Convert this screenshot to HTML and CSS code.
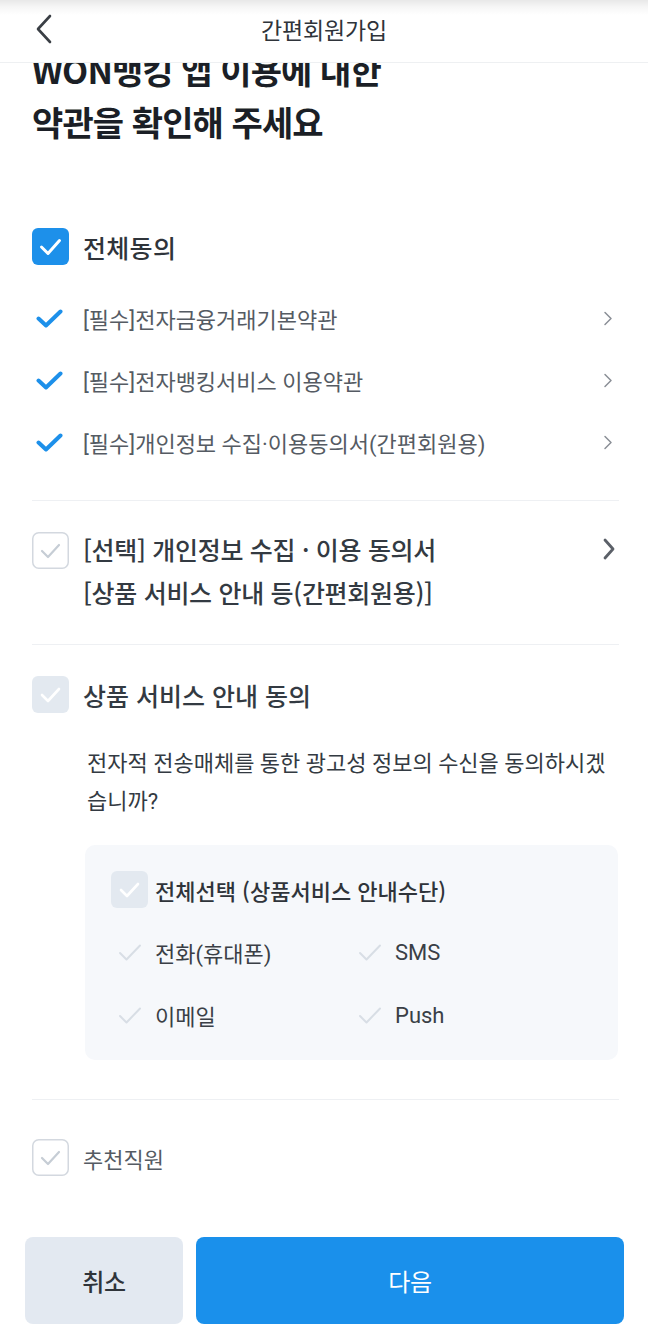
FILE: index.html
```html
<!DOCTYPE html>
<html lang="ko">
<head>
<meta charset="utf-8">
<title>간편회원가입</title>
<link rel="stylesheet" href="styles.css">
</head>
<body>
<header class="topbar">
  <button class="back" aria-label="뒤로">
    <svg width="18" height="30" viewBox="0 0 18 30"><path d="M15 2 L3 15 L15 28" fill="none" stroke="#3a3f45" stroke-width="2.6" stroke-linecap="round" stroke-linejoin="round"/></svg>
  </button>
  <h1 class="topbar-title">간편회원가입</h1>
</header>

<main class="content">
  <h2 class="headline">WON뱅킹 앱 이용에 대한<br>약관을 확인해 주세요</h2>

  <section class="agree-all">
    <div class="row-main">
      <span class="cbox cbox-on">
        <svg width="37" height="37" viewBox="0 0 37 37"><rect x="0" y="0" width="37" height="37" rx="6" fill="#1d90ea"/><path d="M9.5 19 L16 25.5 L27.5 12.5" fill="none" stroke="#fff" stroke-width="3" stroke-linecap="round" stroke-linejoin="round"/></svg>
      </span>
      <span class="label-all">전체동의</span>
    </div>
    <ul class="req-list">
      <li class="req-row">
        <svg class="tick" width="27" height="19" viewBox="0 0 27 19"><path d="M2.5 9.5 L10 16.5 L24.5 2.5" fill="none" stroke="#1d90ea" stroke-width="4" stroke-linecap="round" stroke-linejoin="round"/></svg>
        <span class="req-text">[필수]전자금융거래기본약관</span>
        <svg class="chev" width="10" height="15" viewBox="0 0 10 15"><path d="M2 1.5 L8 7.5 L2 13.5" fill="none" stroke="#8a8f96" stroke-width="1.5" stroke-linecap="round" stroke-linejoin="round"/></svg>
      </li>
      <li class="req-row">
        <svg class="tick" width="27" height="19" viewBox="0 0 27 19"><path d="M2.5 9.5 L10 16.5 L24.5 2.5" fill="none" stroke="#1d90ea" stroke-width="4" stroke-linecap="round" stroke-linejoin="round"/></svg>
        <span class="req-text">[필수]전자뱅킹서비스 이용약관</span>
        <svg class="chev" width="10" height="15" viewBox="0 0 10 15"><path d="M2 1.5 L8 7.5 L2 13.5" fill="none" stroke="#8a8f96" stroke-width="1.5" stroke-linecap="round" stroke-linejoin="round"/></svg>
      </li>
      <li class="req-row">
        <svg class="tick" width="27" height="19" viewBox="0 0 27 19"><path d="M2.5 9.5 L10 16.5 L24.5 2.5" fill="none" stroke="#1d90ea" stroke-width="4" stroke-linecap="round" stroke-linejoin="round"/></svg>
        <span class="req-text">[필수]개인정보 수집·이용동의서(간편회원용)</span>
        <svg class="chev" width="10" height="15" viewBox="0 0 10 15"><path d="M2 1.5 L8 7.5 L2 13.5" fill="none" stroke="#8a8f96" stroke-width="1.5" stroke-linecap="round" stroke-linejoin="round"/></svg>
      </li>
    </ul>
  </section>

  <section class="opt-section">
    <div class="opt-row">
      <span class="cbox cbox-outline">
        <svg width="37" height="37" viewBox="0 0 37 37"><rect x="0.75" y="0.75" width="35.5" height="35.5" rx="6" fill="#fff" stroke="#d3d8df" stroke-width="1.5"/><path d="M10 19 L16 25 L27 13" fill="none" stroke="#c6cdd5" stroke-width="2.2" stroke-linecap="round" stroke-linejoin="round"/></svg>
      </span>
      <span class="opt-text">[선택] 개인정보 수집 · 이용 동의서<br>[상품 서비스 안내 등(간편회원용)]</span>
      <svg class="chev-big" width="14" height="22" viewBox="0 0 14 22"><path d="M3 2 L11 11 L3 20" fill="none" stroke="#5b6068" stroke-width="2.8" stroke-linecap="round" stroke-linejoin="round"/></svg>
    </div>
  </section>

  <section class="svc-section">
    <div class="row-main">
      <span class="cbox cbox-soft">
        <svg width="37" height="37" viewBox="0 0 37 37"><rect x="0" y="0" width="37" height="37" rx="6" fill="#e3e9f0"/><path d="M10 19 L16 25 L27 13" fill="none" stroke="#fff" stroke-width="2.6" stroke-linecap="round" stroke-linejoin="round"/></svg>
      </span>
      <span class="svc-title">상품 서비스 안내 동의</span>
    </div>
    <p class="svc-desc">전자적 전송매체를 통한 광고성 정보의 수신을 동의하시겠습니까?</p>
    <div class="channel-box">
      <div class="channel-all">
        <span class="cbox cbox-soft">
          <svg width="37" height="37" viewBox="0 0 37 37"><rect x="0" y="0" width="37" height="37" rx="6" fill="#e3e9f0"/><path d="M10 19 L16 25 L27 13" fill="none" stroke="#fff" stroke-width="2.6" stroke-linecap="round" stroke-linejoin="round"/></svg>
        </span>
        <span class="channel-all-text">전체선택 (상품서비스 안내수단)</span>
      </div>
      <div class="channel-grid">
        <div class="channel-item">
          <span class="slot"><svg width="24" height="19" viewBox="0 0 24 19"><path d="M2 10 L8.5 16.5 L22 2.5" fill="none" stroke="#d8dee5" stroke-width="2" stroke-linecap="round" stroke-linejoin="round"/></svg></span>
          <span class="channel-text">전화(휴대폰)</span>
        </div>
        <div class="channel-item">
          <span class="slot"><svg width="24" height="19" viewBox="0 0 24 19"><path d="M2 10 L8.5 16.5 L22 2.5" fill="none" stroke="#d8dee5" stroke-width="2" stroke-linecap="round" stroke-linejoin="round"/></svg></span>
          <span class="channel-text">SMS</span>
        </div>
        <div class="channel-item">
          <span class="slot"><svg width="24" height="19" viewBox="0 0 24 19"><path d="M2 10 L8.5 16.5 L22 2.5" fill="none" stroke="#d8dee5" stroke-width="2" stroke-linecap="round" stroke-linejoin="round"/></svg></span>
          <span class="channel-text">이메일</span>
        </div>
        <div class="channel-item">
          <span class="slot"><svg width="24" height="19" viewBox="0 0 24 19"><path d="M2 10 L8.5 16.5 L22 2.5" fill="none" stroke="#d8dee5" stroke-width="2" stroke-linecap="round" stroke-linejoin="round"/></svg></span>
          <span class="channel-text">Push</span>
        </div>
      </div>
    </div>
  </section>

  <section class="staff-section">
    <div class="row-main">
      <span class="cbox cbox-outline">
        <svg width="37" height="37" viewBox="0 0 37 37"><rect x="0.75" y="0.75" width="35.5" height="35.5" rx="6" fill="#fff" stroke="#d3d8df" stroke-width="1.5"/><path d="M10 19 L16 25 L27 13" fill="none" stroke="#c6cdd5" stroke-width="2.2" stroke-linecap="round" stroke-linejoin="round"/></svg>
      </span>
      <span class="staff-text">추천직원</span>
    </div>
  </section>
</main>

<footer class="actions">
  <button class="btn btn-cancel">취소</button>
  <button class="btn btn-next">다음</button>
</footer>
</body>
</html>
```

FILE: styles.css
```css
* { box-sizing: border-box; }
html, body { margin: 0; padding: 0; }
body {
  background: #fff;
  font-family: Roboto, "Noto Sans CJK KR", sans-serif;
  color: #333a42;
  width: 648px;
}
ul { list-style: none; margin: 0; padding: 0; }
p, h1, h2 { margin: 0; }
button { font-family: inherit; border: 0; background: none; padding: 0; cursor: pointer; }

.topbar {
  position: fixed;
  top: 0; left: 0; right: 0;
  height: 63px;
  background: linear-gradient(#e8e8e8 0, #f6f6f6 7px, #fff 15px);
  border-bottom: 1px solid #eef0f2;
  display: flex;
  align-items: center;
  justify-content: center;
  z-index: 10;
}
.back {
  position: absolute;
  left: 35px;
  top: 14px;
  width: 18px; height: 30px;
  display: flex;
}
.topbar-title {
  font-family: "Noto Sans CJK KR", sans-serif;
  font-size: 23px;
  font-weight: 400;
  color: #2f343a;
  letter-spacing: -0.2px;
  margin-top: -4px;
}

.content {
  padding: 44px 29px 0 32px;
}
.headline {
  font-family: "Noto Sans CJK KR", sans-serif;
  font-size: 34px;
  line-height: 52px;
  font-weight: 700;
  color: #1b1f26;
  letter-spacing: -0.9px;
}

.row-main {
  display: flex;
  align-items: center;
  height: 37px;
}
.cbox { display: flex; width: 37px; height: 37px; flex: none; }

.agree-all {
  margin-top: 80px;
  padding-bottom: 27px;
  border-bottom: 1px solid #eef0f3;
}
.label-all {
  margin-left: 14px;
  font-family: "Noto Sans CJK KR", sans-serif;
  font-size: 25px;
  font-weight: 500;
  color: #2f343a;
  letter-spacing: 0.3px;
}
.req-list { margin-top: 22px; }
.req-row {
  display: flex;
  align-items: center;
  height: 62px;
}
.tick { margin-left: 4px; flex: none; }
.req-text {
  margin-left: 20px;
  flex: 1;
  font-size: 22px;
  color: #555b63;
  letter-spacing: 0;
}
.chev { margin-right: 6px; flex: none; }

.opt-section {
  padding: 27px 0 30px;
  border-bottom: 1px solid #eef0f3;
}
.opt-row {
  display: flex;
  align-items: flex-start;
}
.opt-row .cbox { margin-top: 4px; }
.opt-text {
  flex: 1;
  margin-left: 14px;
  font-family: "Noto Sans CJK KR", sans-serif;
  font-size: 25px;
  line-height: 43px;
  font-weight: 500;
  color: #333a42;
  letter-spacing: -0.3px;
}
.chev-big { margin-top: 10px; margin-right: 3px; flex: none; }

.svc-section {
  padding: 31px 0 39px;
  border-bottom: 1px solid #eef0f3;
}
.svc-title {
  margin-left: 14px;
  font-family: "Noto Sans CJK KR", sans-serif;
  font-size: 25px;
  font-weight: 500;
  color: #333a42;
  letter-spacing: 0;
}
.svc-desc {
  margin: 32px 0 0 55px;
  font-size: 22px;
  line-height: 38px;
  color: #333a42;
  letter-spacing: 0;
}
.channel-box {
  margin: 24px 1px 0 53px;
  background: #f6f8fb;
  border-radius: 10px;
  padding: 26px 0 25px 26px;
}
.channel-all {
  display: flex;
  align-items: center;
  height: 37px;
}
.channel-all-text {
  margin-left: 7px;
  font-family: "Noto Sans CJK KR", sans-serif;
  font-size: 22px;
  font-weight: 500;
  color: #2f343a;
  letter-spacing: 0;
}
.channel-grid {
  margin-top: 24px;
  display: grid;
  grid-template-columns: 240px 1fr;
  row-gap: 23px;
}
.channel-item {
  display: flex;
  align-items: center;
  height: 40px;
}
.slot {
  width: 37px;
  display: flex;
  justify-content: center;
}
.channel-text {
  margin-left: 7px;
  font-size: 22px;
  color: #3a3f46;
  letter-spacing: 0;
}

.staff-section {
  padding-top: 39px;
}
.staff-text {
  margin-left: 14px;
  font-size: 22px;
  color: #555b63;
  letter-spacing: 0;
}

.actions {
  display: flex;
  gap: 13px;
  margin: 61px 24px 0 25px;
  height: 87px;
}
.btn {
  height: 87px;
  border-radius: 8px;
  font-size: 24px;
  font-weight: 500;
  letter-spacing: -0.3px;
}
.btn-cancel {
  width: 158px;
  background: #e3e9f1;
  color: #2f343a;
}
.btn-next {
  flex: 1;
  background: #1a90eb;
  color: #fff;
  font-weight: 400;
}
```
